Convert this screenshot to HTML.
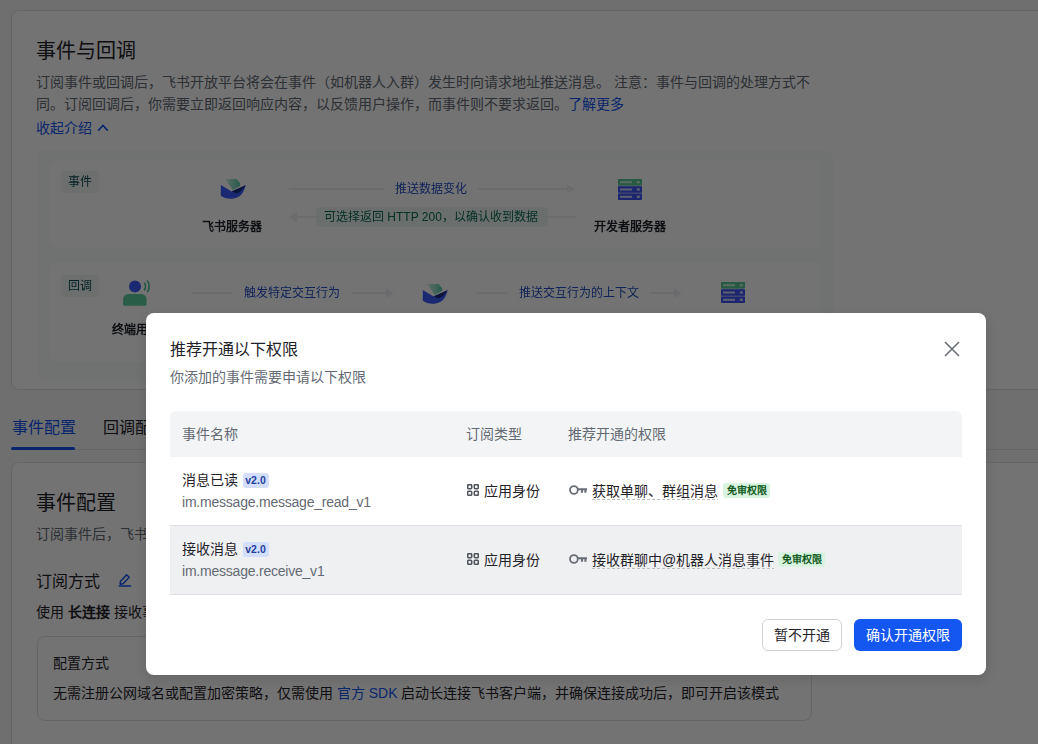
<!DOCTYPE html>
<html lang="zh-CN">
<head>
<meta charset="utf-8">
<title>事件与回调</title>
<style>
*{box-sizing:border-box;margin:0;padding:0}
html,body{width:1038px;height:744px;overflow:hidden}
body{font-family:"Liberation Sans",sans-serif;font-size:14px;color:#1f2329;background:#f5f6f7;position:relative}
.abs{position:absolute;white-space:nowrap}
.card{position:absolute;background:#fff;border:1px solid #dee0e3;border-radius:8px}
.blue{color:#1456f0}
.sec{color:#646a73}
.tag{width:38px;height:22px;border-radius:4px;background:#f1f6f7;color:#0c4d52;font-size:12px;line-height:22px;text-align:center;font-weight:500}
.lbl{font-size:12px;line-height:18px;font-weight:bold;text-align:center;color:#1f2329}
.ver{position:absolute;height:15px;width:26px;border-radius:3px;background:#d3defc;color:#1e3f9e;font-size:10.5px;line-height:15px;text-align:center;font-weight:bold}
.free{position:absolute;height:15px;width:47px;border-radius:3px;background:#d9f3e1;color:#125c21;font-size:10px;line-height:15px;text-align:center;font-weight:bold}
.dash{position:absolute;height:1px;background:repeating-linear-gradient(90deg,#bbbfc4 0 3px,transparent 3px 5px)}
/* overlay */
#mask{position:absolute;left:0;top:0;width:1038px;height:744px;background:rgba(0,0,0,.55)}
/* modal */
#modal{position:absolute;left:146px;top:313px;width:840px;height:362px;background:#fff;border-radius:8px;box-shadow:0 4px 12px rgba(0,0,0,.12)}
</style>
</head>
<body>
<!-- ===== background page ===== -->
<div class="card" style="left:11px;top:10px;width:1100px;height:380px"></div>
<div class="abs" style="left:35.5px;top:37px;font-size:20px;line-height:28px;font-weight:500">事件与回调</div>
<div class="abs sec" style="left:36px;top:71px;line-height:22px">订阅事件或回调后，飞书开放平台将会在事件（如机器人入群）发生时向请求地址推送消息。 注意：事件与回调的处理方式不</div>
<div class="abs sec" style="left:36px;top:93px;line-height:22px">同。订阅回调后，你需要立即返回响应内容，以反馈用户操作，而事件则不要求返回。<span class="blue">了解更多</span></div>
<div class="abs blue" style="left:36px;top:117px;line-height:22px">收起介绍</div>
<svg class="abs" style="left:97px;top:123px" width="12" height="10" viewBox="0 0 12 10"><path d="M1.2 7.6 L6 2.4 L10.8 7.6" fill="none" stroke="#1456f0" stroke-width="1.6"/></svg>

<!-- diagram -->
<div id="dg" style="position:absolute;left:0;top:0;width:1038px;height:400px;filter:blur(.45px)">
<div class="abs" style="left:37px;top:150px;width:796px;height:230px;background:#f9fafb;border-radius:8px"></div>
<div class="abs" style="left:50px;top:160px;width:770px;height:88px;background:#fff;border-radius:8px"></div>
<div class="abs" style="left:50px;top:262px;width:770px;height:100px;background:#fff;border-radius:8px"></div>
<div class="abs tag" style="left:61px;top:170.5px">事件</div>
<div class="abs tag" style="left:61px;top:274.5px">回调</div>
<!-- feishu logo 1 -->
<svg class="abs" style="left:219px;top:175px" width="28" height="26" viewBox="0 0 28 26"><defs><linearGradient id="lgG" x1="0" y1="0" x2="1" y2="0"><stop offset="0" stop-color="#d4f3ea"/><stop offset="1" stop-color="#58c9a8"/></linearGradient></defs><path d="M6.4 4 H17.6 L21.2 8.6 L21 11 L13.6 15 Z" fill="url(#lgG)"/><path d="M1.8 10 L12.6 16.6 L26.6 10.2 C25 17 22 21 18 22.5 C13 24.6 6 24 1.8 20.8 Z" fill="#3d5cff"/><path d="M12.6 16.6 L26.6 10.2 C24.6 13.4 22 16 18 18.6 Z" fill="#1a2a7c"/></svg>
<div class="abs lbl" style="left:182px;top:218px;width:100px">飞书服务器</div>
<!-- arrows row 1 -->
<div class="abs" style="left:289px;top:188px;width:282px;height:2px;background:#eff0f3"></div>
<div class="abs" style="left:567px;top:184px;width:0;height:0;border-left:8px solid #eff0f3;border-top:5px solid transparent;border-bottom:5px solid transparent"></div>
<div class="abs" style="left:384px;top:180px;width:94px;height:18px;background:#fff"></div>
<div class="abs" style="left:395px;top:180px;font-size:12px;line-height:18px;color:#2450c4">推送数据变化</div>
<div class="abs" style="left:296px;top:216px;width:280px;height:2px;background:#eff0f3"></div>
<div class="abs" style="left:289px;top:212px;width:0;height:0;border-right:8px solid #eff0f3;border-top:5px solid transparent;border-bottom:5px solid transparent"></div>
<div class="abs" style="left:316px;top:207px;width:232px;height:20px;background:#ebf6f2;border-radius:4px"></div>
<div class="abs" style="left:324px;top:208px;font-size:12px;line-height:18px;color:#0c6b55">可选择返回 HTTP 200，以确认收到数据</div>
<!-- server 1 -->
<svg class="abs" style="left:618px;top:179px" width="24" height="21" viewBox="0 0 24 21"><rect x="0" y="-.6" width="24" height="22.2" rx="1" fill="#d5dcf8"/><rect x="0" y="0" width="24" height="6.4" rx=".8" fill="#58c796"/><rect x="0" y="7.3" width="24" height="6.4" rx=".8" fill="#3d55f5"/><rect x="0" y="14.6" width="24" height="6.4" rx=".8" fill="#3d55f5"/><rect x="2" y="2.2" width="12" height="2" fill="#c4efdc"/><rect x="2" y="9.5" width="12" height="2" fill="#cdd5fa"/><rect x="2" y="16.8" width="12" height="2" fill="#cdd5fa"/><rect x="18.8" y="2" width="3" height="2.4" fill="#c4efdc"/><rect x="18.8" y="9.3" width="3" height="2.4" fill="#cdd5fa"/><rect x="18.8" y="16.6" width="3" height="2.4" fill="#cdd5fa"/></svg>
<div class="abs lbl" style="left:580px;top:218px;width:100px">开发者服务器</div>
<!-- user icon -->
<svg class="abs" style="left:120px;top:277px" width="32" height="30" viewBox="0 0 32 30"><circle cx="15" cy="9.5" r="6" fill="#3d5cff"/><path d="M3.1 27.3 V22.4 C3.1 19 5.6 16.9 9 16.9 H20.7 C24.1 16.9 26.6 19 26.6 22.4 V27.3 C26.6 28.2 25.9 28.8 25.1 28.8 H4.6 C3.8 28.8 3.1 28.2 3.1 27.3 Z" fill="#5bcf9f"/><path d="M24.2 5.8 C25.8 8 25.8 11 24.2 13.2 M27.2 3.6 C29.9 7 29.9 12 27.2 15.2" fill="none" stroke="#4fbf93" stroke-width="1.6"/></svg>
<div class="abs lbl" style="left:86px;top:321px;width:100px">终端用户</div>
<!-- arrows row 2 -->
<div class="abs" style="left:192px;top:292px;width:196px;height:2px;background:#eff0f3"></div>
<div class="abs" style="left:386px;top:288px;width:0;height:0;border-left:8px solid #eff0f3;border-top:5px solid transparent;border-bottom:5px solid transparent"></div>
<div class="abs" style="left:232px;top:284px;width:120px;height:18px;background:#fff"></div>
<div class="abs" style="left:244px;top:284px;font-size:12px;line-height:18px;color:#2450c4">触发特定交互行为</div>
<svg class="abs" style="left:421px;top:280px" width="28" height="26" viewBox="0 0 28 26"><defs><linearGradient id="lgH" x1="0" y1="0" x2="1" y2="0"><stop offset="0" stop-color="#d4f3ea"/><stop offset="1" stop-color="#58c9a8"/></linearGradient></defs><path d="M6.4 4 H17.6 L21.2 8.6 L21 11 L13.6 15 Z" fill="url(#lgH)"/><path d="M1.8 10 L12.6 16.6 L26.6 10.2 C25 17 22 21 18 22.5 C13 24.6 6 24 1.8 20.8 Z" fill="#3d5cff"/><path d="M12.6 16.6 L26.6 10.2 C24.6 13.4 22 16 18 18.6 Z" fill="#1a2a7c"/></svg>
<div class="abs" style="left:476px;top:292px;width:200px;height:2px;background:#eff0f3"></div>
<div class="abs" style="left:674px;top:288px;width:0;height:0;border-left:8px solid #eff0f3;border-top:5px solid transparent;border-bottom:5px solid transparent"></div>
<div class="abs" style="left:508px;top:284px;width:142px;height:18px;background:#fff"></div>
<div class="abs" style="left:519px;top:284px;font-size:12px;line-height:18px;color:#2450c4">推送交互行为的上下文</div>
<svg class="abs" style="left:721px;top:282px" width="24" height="21" viewBox="0 0 24 21"><rect x="0" y="-.6" width="24" height="22.2" rx="1" fill="#d5dcf8"/><rect x="0" y="0" width="24" height="6.4" rx=".8" fill="#58c796"/><rect x="0" y="7.3" width="24" height="6.4" rx=".8" fill="#3d55f5"/><rect x="0" y="14.6" width="24" height="6.4" rx=".8" fill="#3d55f5"/><rect x="2" y="2.2" width="12" height="2" fill="#c4efdc"/><rect x="2" y="9.5" width="12" height="2" fill="#cdd5fa"/><rect x="2" y="16.8" width="12" height="2" fill="#cdd5fa"/><rect x="18.8" y="2" width="3" height="2.4" fill="#c4efdc"/><rect x="18.8" y="9.3" width="3" height="2.4" fill="#cdd5fa"/><rect x="18.8" y="16.6" width="3" height="2.4" fill="#cdd5fa"/></svg>
</div>

<!-- tabs -->
<div class="abs blue" style="left:11.5px;top:416.5px;font-size:16px;line-height:22px">事件配置</div>
<div class="abs" style="left:103px;top:416.5px;font-size:16px;line-height:22px">回调配置</div>
<div class="abs" style="left:11px;top:449px;width:1030px;height:1px;background:#dee0e3"></div>
<div class="abs" style="left:11px;top:447px;width:64px;height:3px;background:#1456f0;border-radius:2px"></div>

<!-- second card -->
<div class="card" style="left:11px;top:462px;width:1100px;height:400px"></div>
<div class="abs" style="left:35.5px;top:489px;font-size:20px;line-height:28px;font-weight:500">事件配置</div>
<div class="abs sec" style="left:36px;top:523px;line-height:22px">订阅事件后，飞书开放平台将会在事件发生时向请求地址推送消息</div>
<div class="abs" style="left:36px;top:570px;font-size:16px;line-height:24px">订阅方式</div>
<svg class="abs" style="left:118px;top:573px" width="14" height="14" viewBox="0 0 14 14"><path d="M2.4 8.6 L8.6 1.8 L11.2 4.2 L5 10.8 L2.2 11.2 Z" fill="none" stroke="#1456f0" stroke-width="1.5" stroke-linejoin="round"/><path d="M0.8 13 H13.2" stroke="#1456f0" stroke-width="1.5"/></svg>
<div class="abs" style="left:36px;top:601px;line-height:22px">使用 <b>长连接</b> 接收事件</div>
<div class="abs" style="left:36.5px;top:635.5px;width:775.5px;height:85px;border:1px solid #dee0e3;border-radius:8px"></div>
<div class="abs" style="left:53px;top:652px;line-height:22px">配置方式</div>
<div class="abs" style="left:53px;top:682px;line-height:22px">无需注册公网域名或配置加密策略，仅需使用 <span class="blue">官方 SDK</span> 启动长连接飞书客户端，并确保连接成功后，即可开启该模式</div>

<div id="mask"></div>

<!-- ===== modal ===== -->
<div id="modal"></div>
<div class="abs" style="left:170px;top:338px;font-size:16px;line-height:24px;font-weight:500">推荐开通以下权限</div>
<div class="abs sec" style="left:170px;top:366px;line-height:22px">你添加的事件需要申请以下权限</div>
<svg class="abs" style="left:944px;top:341px" width="16" height="16" viewBox="0 0 16 16"><path d="M1 1 L15 15 M15 1 L1 15" stroke="#666b73" stroke-width="1.5" fill="none"/></svg>

<div class="abs" style="left:170px;top:410.5px;width:792px;height:46px;background:#f3f4f6;border-radius:6px 6px 0 0"></div>
<div class="abs sec" style="left:182px;top:423px;line-height:22px">事件名称</div>
<div class="abs sec" style="left:466px;top:423px;line-height:22px">订阅类型</div>
<div class="abs sec" style="left:568px;top:423px;line-height:22px">推荐开通的权限</div>

<div class="abs" style="left:170px;top:525px;width:792px;height:1px;background:#dee0e3"></div>
<div class="abs" style="left:170px;top:526px;width:792px;height:68px;background:#eff0f2"></div>
<div class="abs" style="left:170px;top:594px;width:792px;height:1px;background:#dee0e3"></div>

<div class="abs" style="left:182px;top:469px;line-height:22px">消息已读</div>
<div class="abs sec" style="left:182px;top:491px;line-height:22px;letter-spacing:-.22px">im.message.message_read_v1</div>
<div class="abs" style="left:182px;top:538px;line-height:22px">接收消息</div>
<div class="abs sec" style="left:182px;top:560px;line-height:22px;letter-spacing:-.22px">im.message.receive_v1</div>

<div class="abs" style="left:484px;top:480px;line-height:22px">应用身份</div>
<div class="abs" style="left:484px;top:549px;line-height:22px">应用身份</div>
<div class="abs" style="left:592px;top:480px;line-height:22px">获取单聊、群组消息</div>
<div class="abs" style="left:592px;top:549px;line-height:22px">接收群聊中@机器人消息事件</div>


<div class="ver" style="left:242.5px;top:472.5px">v2.0</div>
<div class="ver" style="left:242.5px;top:541.5px">v2.0</div>
<svg class="abs" style="left:467px;top:484px" width="12" height="12" viewBox="0 0 12 12"><g fill="none" stroke="#50555c" stroke-width="1.6"><rect x=".7" y=".7" width="4" height="4" rx="1"/><rect x="7.3" y=".7" width="4" height="4" rx="1"/><rect x=".7" y="7.3" width="4" height="4" rx="1"/><rect x="7.3" y="7.3" width="4" height="4" rx="1"/></g></svg>
<svg class="abs" style="left:467px;top:553px" width="12" height="12" viewBox="0 0 12 12"><g fill="none" stroke="#50555c" stroke-width="1.6"><rect x=".7" y=".7" width="4" height="4" rx="1"/><rect x="7.3" y=".7" width="4" height="4" rx="1"/><rect x=".7" y="7.3" width="4" height="4" rx="1"/><rect x="7.3" y="7.3" width="4" height="4" rx="1"/></g></svg>
<svg class="abs" style="left:569px;top:485px" width="18" height="10" viewBox="0 0 18 10"><g fill="none" stroke="#696e76" stroke-width="1.8"><circle cx="4.9" cy="5" r="3.9"/><path d="M8.8 4.2 H18 M13 4.2 V7.8 M16.4 4.2 V7.8" stroke-width="2.1"/></g></svg>
<svg class="abs" style="left:569px;top:554px" width="18" height="10" viewBox="0 0 18 10"><g fill="none" stroke="#696e76" stroke-width="1.8"><circle cx="4.9" cy="5" r="3.9"/><path d="M8.8 4.2 H18 M13 4.2 V7.8 M16.4 4.2 V7.8" stroke-width="2.1"/></g></svg>
<div class="dash" style="left:592px;top:499px;width:126px"></div>
<div class="dash" style="left:592px;top:568px;width:182px"></div>
<div class="free" style="left:723px;top:483px">免审权限</div>
<div class="free" style="left:778px;top:552px">免审权限</div>
<div class="abs" style="left:762px;top:619px;width:80px;height:32px;border:1px solid #d0d3d6;border-radius:6px;background:#fff;text-align:center;line-height:30px">暂不开通</div>
<div class="abs" style="left:854px;top:619px;width:108px;height:32px;border-radius:6px;background:#1456f0;color:#fff;text-align:center;line-height:32px">确认开通权限</div>
</body>
</html>
